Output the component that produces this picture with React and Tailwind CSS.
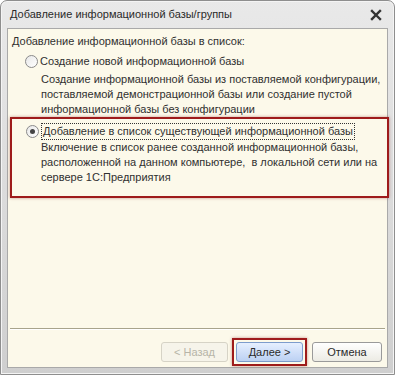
export default function App() {
  const font = { fontFamily: '"Liberation Sans", Arial, sans-serif' };
  return (
    <div className="w-[395px] h-[375px] bg-white" style={font}>
      <div className="w-[395px] h-[375px] rounded-t-[7px] border border-[#8e8e8e] bg-gradient-to-b from-[#e9e9e9] to-[#cfcfcf] flex flex-col px-[6px] pb-[6px] shadow-[inset_0_0_0_1px_#f4f4f4]">
        <div className="h-[27px] flex items-center justify-between pl-[3px] pr-[4px] shrink-0">
          <span className="text-[11px] text-[#2a2a2a] whitespace-nowrap">Добавление информационной базы/группы</span>
          <svg width="12" height="12" viewBox="0 0 12 12" className="mr-[2px]">
            <path d="M2 2 L10 10 M10 2 L2 10" stroke="#333" strokeWidth="2.4" strokeLinecap="square" />
          </svg>
        </div>
        <div className="flex-1 bg-[#fcf9ea] border border-[#a9a9a9] flex flex-col text-[11px] text-[#303030] whitespace-nowrap">
          <div className="pl-[4px] pt-[5px] leading-[15px]">Добавление информационной базы в список:</div>
          <div className="pl-[17px] pt-[5px] flex items-center leading-[15px]">
            <span className="w-[13px] h-[13px] rounded-full border border-[#8a8a8a] bg-gradient-to-br from-[#e8e8e8] to-[#ffffff] mr-[2px]"></span>
            <span>Создание новой информационной базы</span>
          </div>
          <div className="pl-[33px] pt-[3px] leading-[15px] pr-[4px]">
            Создание информационной базы из поставляемой конфигурации,<br />
            поставляемой демонстрационной базы или создание пустой<br />
            информационной базы без конфигурации
          </div>
          <div className="mt-0 ml-[2px] mr-[-2px] h-[81px] border-2 border-[#9e1b1b] shadow-[0_0_3px_rgba(120,0,0,0.4)] flex flex-col">
            <div className="pl-[14px] pt-[4px] flex items-center leading-[15px]">
              <span className="w-[13px] h-[13px] rounded-full border border-[#8a8a8a] bg-gradient-to-br from-[#e8e8e8] to-[#ffffff] mr-[2px] flex items-center justify-center">
                <span className="w-[5px] h-[5px] rounded-full bg-[#444]"></span>
              </span>
              <span className="border border-dotted border-[#333] px-[1px]">Добавление в список существующей информационной базы</span>
            </div>
            <div className="pl-[29px] pt-0 leading-[15px] pr-[4px]">
              Включение в список ранее созданной информационной базы,<br />
              расположенной на данном компьютере,&nbsp; в локальной сети или на<br />
              сервере 1С:Предприятия
            </div>
          </div>
          <div className="flex-1"></div>
          <div className="mx-[2px] h-[2px] border-t border-[#a8a48c] border-b border-b-[#ffffff]"></div>
          <div className="h-[37px] flex items-start justify-end pr-[5px] pt-[8px]">
            <button className="w-[67px] h-[20px] mt-[4px] rounded-[3px] border border-[#d6d3c6] bg-[#f6f4ea] text-[#b7b4a8] text-[11px]" style={font}>&lt; Назад</button>
            <div className="ml-[4px] p-[2px] border-2 border-[#9e1b1b] shadow-[0_0_3px_rgba(120,0,0,0.4)]">
              <button className="block w-[67px] h-[20px] rounded-[3px] border border-[#7d9ccc] bg-gradient-to-b from-[#e6efff] to-[#bcd1f3] text-[#2a2a2a] text-[11px]" style={font}>Далее &gt;</button>
            </div>
            <button className="w-[70px] h-[20px] mt-[4px] rounded-[3px] border border-[#9a9a9a] bg-gradient-to-b from-[#ffffff] to-[#ecebe4] text-[#2a2a2a] text-[11px] ml-[5px]" style={font}>Отмена</button>
          </div>
        </div>
      </div>
    </div>
  );
}
